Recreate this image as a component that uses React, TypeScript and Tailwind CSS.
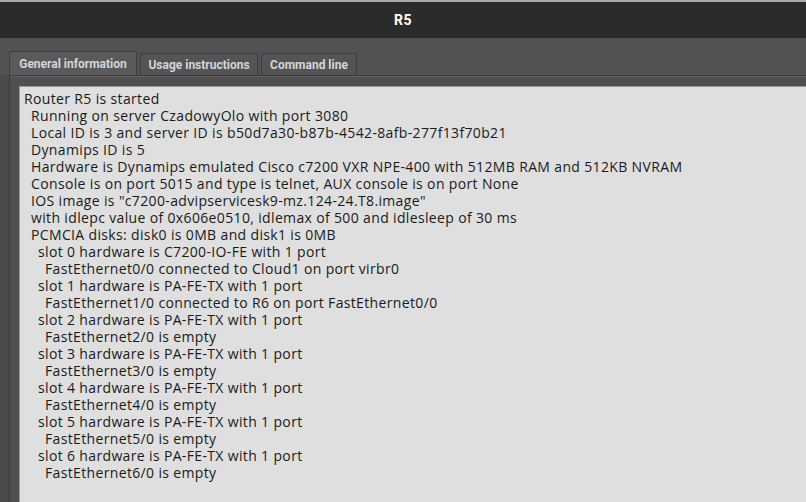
import React from "react";

const lines: [number, string][] = [
  [0, "Router R5 is started"],
  [1, "Running on server CzadowyOlo with port 3080"],
  [1, "Local ID is 3 and server ID is b50d7a30-b87b-4542-8afb-277f13f70b21"],
  [1, "Dynamips ID is 5"],
  [1, "Hardware is Dynamips emulated Cisco c7200 VXR NPE-400 with 512MB RAM and 512KB NVRAM"],
  [1, "Console is on port 5015 and type is telnet, AUX console is on port None"],
  [1, 'IOS image is "c7200-advipservicesk9-mz.124-24.T8.image"'],
  [1, "with idlepc value of 0x606e0510, idlemax of 500 and idlesleep of 30 ms"],
  [1, "PCMCIA disks: disk0 is 0MB and disk1 is 0MB"],
  [2, "slot 0 hardware is C7200-IO-FE with 1 port"],
  [3, "FastEthernet0/0 connected to Cloud1 on port virbr0"],
  [2, "slot 1 hardware is PA-FE-TX with 1 port"],
  [3, "FastEthernet1/0 connected to R6 on port FastEthernet0/0"],
  [2, "slot 2 hardware is PA-FE-TX with 1 port"],
  [3, "FastEthernet2/0 is empty"],
  [2, "slot 3 hardware is PA-FE-TX with 1 port"],
  [3, "FastEthernet3/0 is empty"],
  [2, "slot 4 hardware is PA-FE-TX with 1 port"],
  [3, "FastEthernet4/0 is empty"],
  [2, "slot 5 hardware is PA-FE-TX with 1 port"],
  [3, "FastEthernet5/0 is empty"],
  [2, "slot 6 hardware is PA-FE-TX with 1 port"],
  [3, "FastEthernet6/0 is empty"],
];

const indentClass = ["pl-0", "pl-[7px]", "pl-[14px]", "pl-[21px]"];

export default function App() {
  return (
    <div className="w-[806px] h-[502px] overflow-hidden bg-[#525252] flex flex-col font-['Open_Sans',sans-serif]">
      <div className="h-[2px] bg-[#a8a8a8] shrink-0" />
      <div className="h-[36px] shrink-0 bg-[#2b2b2b] flex items-center justify-center">
        <span className="text-white font-bold text-[14px] font-['Roboto',sans-serif] tracking-[0.5px]">R5</span>
      </div>
      <div className="flex-1 flex flex-col pt-[13px] min-h-0">
        <div className="flex items-end h-[24px] pl-[9px] gap-[3px] font-['Roboto',sans-serif] font-bold text-[12px] text-[#d0d6dc]">
          <div className="w-[128px] h-[24px] pt-[1px] bg-[#5a5a5a] border border-b-0 border-[#3e3e3e] rounded-t-[3px] flex items-center justify-center">
            General information
          </div>
          <div className="w-[118px] h-[22px] pt-[1px] bg-[#545454] border border-b-0 border-[#3e3e3e] rounded-t-[3px] flex items-center justify-center">
            Usage instructions
          </div>
          <div className="w-[96px] h-[22px] pt-[1px] bg-[#545454] border border-b-0 border-[#3e3e3e] rounded-t-[3px] flex items-center justify-center">
            Command line
          </div>
        </div>
        <div className="flex-1 flex min-h-0 bg-[#4a4a4a] pl-[9px]">
          <div className="flex-1 flex flex-col border-l border-t border-[#3a3a3a] bg-[#505050]">
            <div className="h-px bg-[#626262] shrink-0" />
            <div className="flex-1 pt-[9px] pl-[9px] flex min-h-0">
              <div className="flex-1 bg-[#dfdfdf] border-l border-t border-[#9a9a9a] pl-[4px] pt-[3px] text-[14px] leading-[17px] tracking-[0.35px] text-[#1a1a1a] whitespace-nowrap">
                {lines.map(([lvl, t], i) => (
                  <div key={i} className={indentClass[lvl]}>
                    {t}
                  </div>
                ))}
              </div>
            </div>
          </div>
        </div>
      </div>
    </div>
  );
}
